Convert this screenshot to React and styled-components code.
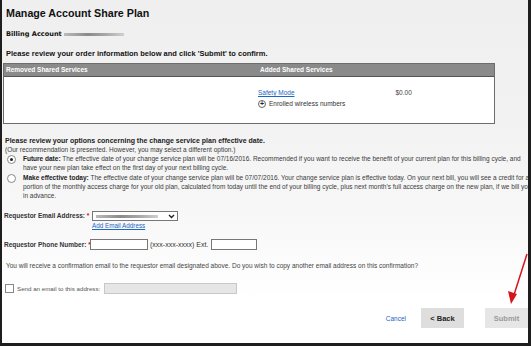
import React from "react";
import styled, { createGlobalStyle } from "styled-components";

const Global = createGlobalStyle`
  html, body { margin: 0; padding: 0; background: #fff; }
  body { font-family: "Liberation Sans", Arial, sans-serif; color: #333; }
`;

const Frame = styled.div`
  position: relative;
  width: 531px;
  height: 346px;
  box-sizing: border-box;
  border-left: 2px solid #1e1e1e;
  border-right: 3px solid #1e1e1e;
  border-bottom: 3px solid #1e1e1e;
  background: linear-gradient(#efefef 0px, #f2f2f2 120px, #f8f8f8 220px, #ffffff 300px);
  padding: 6px 0 0 1px;
  overflow: hidden;
`;

const Title = styled.h1`
  margin: 0 0 0 3px;
  font-size: 10.7px;
  line-height: 14px;
  font-weight: bold;
  color: #111;
`;

const Billing = styled.div`
  margin: 10px 0 0 3px;
  display: flex;
  align-items: center;
  gap: 2px;
  font-family: "DejaVu Sans", Verdana, sans-serif;
  font-size: 6.6px;
  line-height: 9px;
  font-weight: bold;
  color: #111;
`;

const Blur = styled.span`
  display: inline-block;
  width: ${(p) => p.$w}px;
  height: ${(p) => p.$h || 4}px;
  background: linear-gradient(90deg, #bbb, #8a8a8a 40%, #a8a8a8 70%, #d0d0d0);
  filter: blur(0.6px);
`;

const Instruction = styled.div`
  margin: 10px 0 0 3px;
  font-size: 7.5px;
  line-height: 9px;
  font-weight: bold;
  color: #111;
`;

const Table = styled.div`
  margin-top: 5px;
  width: 492px;
  box-sizing: border-box;
  border: 1px solid #6d6d6d;
  display: grid;
  grid-template-columns: 254px 1fr;
  background: #fff;
`;

const HeadCell = styled.div`
  background: #8a8a8a;
  color: #fff;
  font-size: 6.5px;
  font-weight: bold;
  height: 12px;
  line-height: 12px;
  padding-left: 2px;
`;

const BodyCell = styled.div`
  height: 47px;
  border-top: 1px solid #555;
  box-sizing: border-box;
  padding: 11px 0 0 0;
  font-size: 6.5px;
  line-height: 9px;
`;

const ServiceRow = styled.div`
  display: flex;
  align-items: center;
`;

const Link = styled.a`
  color: #1a66c4;
  text-decoration: ${(p) => (p.$plain ? "none" : "underline")};
  font-size: ${(p) => p.$size || 6.5}px;
  line-height: 9px;
  cursor: pointer;
`;

const Price = styled.span`
  margin-left: 101px;
  color: #444;
`;

const Enrolled = styled.div`
  margin-top: 2px;
  display: flex;
  align-items: center;
  gap: 3px;
  color: #333;
`;

const PlusCircle = styled.span`
  width: 6px;
  height: 6px;
  border-radius: 50%;
  border: 1px solid #666;
  font-size: 7px;
  line-height: 6px;
  text-align: center;
  font-weight: bold;
  color: #222;
  background: #fff;
`;

const Options = styled.div`
  margin-top: 12px;
  margin-left: 2px;
  font-size: 6.5px;
  color: #3a3a3a;
`;

const OptHeading = styled.div`
  font-weight: bold;
  font-size: 7px;
  color: #222;
  line-height: 9px;
`;

const OptNote = styled.div`
  line-height: 9px;
`;

const Option = styled.div`
  display: flex;
  gap: 7px;
  margin-top: ${(p) => p.$mt}px;
  margin-left: 2px;
  line-height: 9px;
`;

const Radio = styled.span`
  flex: none;
  width: 7px;
  height: 7px;
  margin-top: 1px;
  border-radius: 50%;
  border: 1px solid #888;
  background: #fff;
  display: flex;
  align-items: center;
  justify-content: center;
  &::after {
    content: "";
    width: 3px;
    height: 3px;
    border-radius: 50%;
    background: ${(p) => (p.$checked ? "#222" : "transparent")};
  }
`;

const OptText = styled.div`
  white-space: nowrap;
  b { color: #222; }
`;

const FieldRow = styled.div`
  display: flex;
  align-items: ${(p) => p.$align || "center"};
  margin-top: ${(p) => p.$mt}px;
  margin-left: 1px;
  font-size: 6.5px;
  color: #333;
`;

const Label = styled.span`
  font-weight: bold;
  color: #333;
  width: ${(p) => p.$w}px;
  flex: none;
  white-space: nowrap;
  line-height: 10px;
`;

const Req = styled.span`
  color: #d01010;
`;

const EmailCol = styled.div`
  display: flex;
  flex-direction: column;
`;

const Select = styled.div`
  width: 86px;
  height: 10px;
  box-sizing: border-box;
  border: 1px solid #777;
  background: #fff;
  display: flex;
  align-items: center;
  justify-content: space-between;
  padding: 0 2px 0 3px;
`;

const Input = styled.div`
  width: ${(p) => p.$w}px;
  height: 11px;
  box-sizing: border-box;
  border: 1px solid ${(p) => (p.$disabled ? "#c8c8c8" : "#777")};
  background: ${(p) => (p.$disabled ? "#e6e6e6" : "#fff")};
`;

const Hint = styled.span`
  margin: 0 3px 0 2px;
  font-size: 7px;
  color: #333;
`;

const Notice = styled.div`
  margin-top: 11px;
  margin-left: 3px;
  font-size: 6.5px;
  line-height: 9px;
  color: #444;
`;

const Check = styled.span`
  width: 7px;
  height: 7px;
  border: 1px solid #888;
  background: #fff;
  margin: 0 3px 0 1px;
  flex: none;
`;

const SendLabel = styled.span`
  font-size: 6.2px;
  color: #555;
  margin-right: 4px;
`;

const Actions = styled.div`
  display: flex;
  align-items: center;
  justify-content: flex-end;
  margin-top: 14px;
  padding-right: 0px;
`;

const Button = styled.button`
  font-family: inherit;
  font-size: 7.5px;
  font-weight: bold;
  border: none;
  height: 20px;
  width: 43px;
  margin-left: ${(p) => p.$ml}px;
  background: ${(p) => (p.$disabled ? "#e6e6e6" : "#dedede")};
  color: ${(p) => (p.$disabled ? "#9a9a9a" : "#222")};
  padding: 0;
`;

const Arrow = styled.svg`
  position: absolute;
  left: 498px;
  top: 252px;
`;

export default function App() {
  return (
    <>
      <Global />
      <Frame>
        <Title>Manage Account Share Plan</Title>
        <Billing>
          Billing Account <Blur $w={60} $h={3} />
        </Billing>
        <Instruction>
          Please review your order information below and click 'Submit' to confirm.
        </Instruction>
        <Table>
          <HeadCell>Removed Shared Services</HeadCell>
          <HeadCell>Added Shared Services</HeadCell>
          <BodyCell />
          <BodyCell>
            <ServiceRow>
              <Link>Safety Mode</Link>
              <Price>$0.00</Price>
            </ServiceRow>
            <Enrolled>
              <PlusCircle>+</PlusCircle>
              Enrolled wireless numbers
            </Enrolled>
          </BodyCell>
        </Table>

        <Options>
          <OptHeading>
            Please review your options concerning the change service plan effective date.
          </OptHeading>
          <OptNote>
            (Our recommendation is presented. However, you may select a different option.)
          </OptNote>
          <Option $mt={0}>
            <Radio $checked />
            <OptText>
              <b>Future date:</b> The effective date of your change service plan will be
              07/16/2016. Recommended if you want to receive the benefit of your current plan
              for this billing cycle, and
              <br />
              have your new plan take effect on the first day of your next billing cycle.
            </OptText>
          </Option>
          <Option $mt={1}>
            <Radio />
            <OptText>
              <b>Make effective today:</b> The effective date of your change service plan will
              be 07/07/2016. Your change service plan is effective today. On your next bill, you
              will see a credit for a
              <br />
              portion of the monthly access charge for your old plan, calculated from today
              until the end of your billing cycle, plus next month's full access charge on the
              new plan, if we bill you
              <br />
              in advance.
            </OptText>
          </Option>
        </Options>

        <FieldRow $mt={11} $align="flex-start">
          <Label $w={88}>
            Requestor Email Address: <Req>*</Req>
          </Label>
          <EmailCol>
            <Select>
              <Blur $w={62} $h={3} />
              <svg width="7" height="5" viewBox="0 0 7 5">
                <path d="M1 1 L3.5 3.5 L6 1" stroke="#222" strokeWidth="1.4" fill="none" />
              </svg>
            </Select>
            <Link $size={6.3}>Add Email Address</Link>
          </EmailCol>
        </FieldRow>

        <FieldRow $mt={9}>
          <Label $w={86}>
            Requestor Phone Number: <Req>*</Req>
          </Label>
          <Input $w={58} />
          <Hint>(xxx-xxx-xxxx) Ext.</Hint>
          <Input $w={46} />
        </FieldRow>

        <Notice>
          You will receive a confirmation email to the requestor email designated above. Do you
          wish to copy another email address on this confirmation?
        </Notice>

        <FieldRow $mt={13}>
          <Check />
          <SendLabel>Send an email to this address:</SendLabel>
          <Input $w={133} $disabled />
        </FieldRow>

        <Actions>
          <Link $size={6.5} $plain>
            Cancel
          </Link>
          <Button $ml={15}>&lt; Back</Button>
          <Button $ml={21} $disabled>
            Submit
          </Button>
        </Actions>

        <Arrow width="30" height="55" viewBox="0 0 30 55">
          <path d="M27 2 L13 46" stroke="#d8141b" strokeWidth="1.5" fill="none" />
          <path d="M8 39 L11 52 L17 42 Z" fill="#d8141b" />
        </Arrow>
      </Frame>
    </>
  );
}
